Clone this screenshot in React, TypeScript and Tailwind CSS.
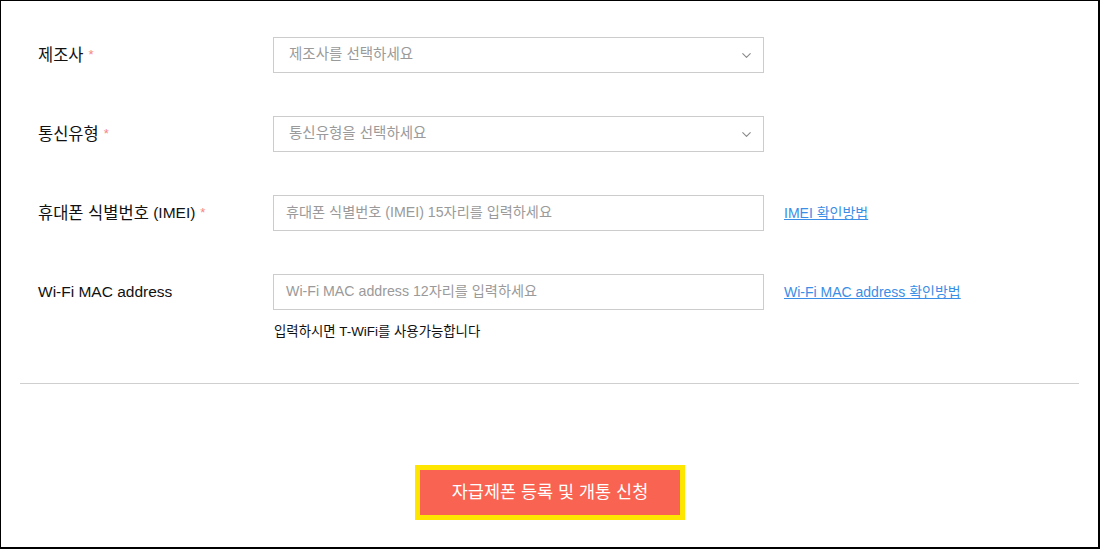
import { ChevronDown } from 'lucide-react';

const font = { fontFamily: '"Liberation Sans", "Noto Sans CJK KR", sans-serif' };

function Label({ ko, en, required }: { ko?: string; en?: string; required?: boolean }) {
    return (
        <div className="flex w-[235px] shrink-0 items-center text-[15.5px] text-[#111]">
            {ko && <span className="text-[16.5px]">{ko}</span>}
            {ko && en && <span>&nbsp;</span>}
            {en && <span>{en}</span>}
            {required && <span className="ml-[5px] text-[13px] text-[#f58686]">*</span>}
        </div>
    );
}

function SelectBox({ placeholder }: { placeholder: string }) {
    return (
        <div className="flex h-[36px] w-[491px] items-center justify-between border border-[#cccccc] pl-[15px] pr-[9px] text-[14.5px] text-[#9a9a9a]">
            <span>{placeholder}</span>
            <ChevronDown size={15} strokeWidth={1.75} className="text-[#8a8a8a]" />
        </div>
    );
}

function InputBox({ placeholder }: { placeholder: string }) {
    return (
        <div className="flex h-[36px] w-[491px] items-center border border-[#cccccc] pl-[12px] text-[14.2px] text-[#9a9a9a]">
            {placeholder}
        </div>
    );
}

export default function App() {
    return (
        <div style={font} className="h-[549px] w-[1100px] overflow-hidden border border-r-2 border-b-2 border-black bg-white">
            <div className="flex flex-col gap-[43px] pt-[36px] pl-[37px]">
                <div className="flex items-center">
                    <Label ko="제조사" required />
                    <SelectBox placeholder="제조사를 선택하세요" />
                </div>
                <div className="flex items-center">
                    <Label ko="통신유형" required />
                    <SelectBox placeholder="통신유형을 선택하세요" />
                </div>
                <div className="flex items-center">
                    <Label ko="휴대폰 식별번호" en="(IMEI)" required />
                    <InputBox placeholder="휴대폰 식별번호 (IMEI) 15자리를 입력하세요" />
                    <a className="ml-[20px] text-[14px] text-[#3a8ee6] underline">IMEI 확인방법</a>
                </div>
                <div className="flex flex-col">
                    <div className="flex items-center">
                        <Label en="Wi-Fi MAC address" />
                        <InputBox placeholder="Wi-Fi MAC address 12자리를 입력하세요" />
                        <a className="ml-[20px] text-[14px] text-[#3a8ee6] underline">Wi-Fi MAC address 확인방법</a>
                    </div>
                    <p className="mt-[12px] ml-[236px] text-[13.4px] text-[#111]">입력하시면 T-WiFi를 사용가능합니다</p>
                </div>
            </div>

            <div className="mx-[19px] mt-[41px] h-px bg-[#cfcfcf]" />

            <div className="mt-[81px] flex justify-center">
                <button className="ml-[1px] h-[55px] w-[270px] border-[5px] border-[#ffe600] bg-[#f96352] text-[17.5px] text-white">
                    자급제폰 등록 및 개통 신청
                </button>
            </div>
        </div>
    );
}
